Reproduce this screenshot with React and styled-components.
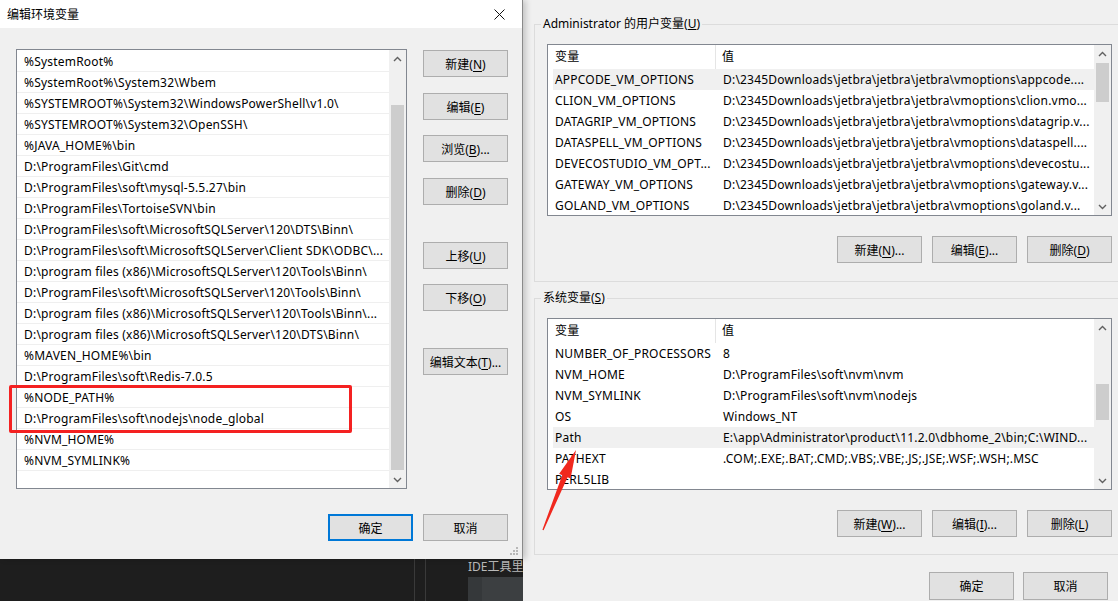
import styled, { createGlobalStyle } from "styled-components";

const GlobalStyle = createGlobalStyle`
  html, body {
    margin: 0;
    padding: 0;
  }
  body {
    width: 1118px;
    height: 601px;
    overflow: hidden;
    font-family: "Noto Sans", "Noto Sans CJK SC", sans-serif;
    font-size: 12px;
    letter-spacing: 0.2px;
    color: #000;
  }
`;

const Screen = styled.div`
  display: flex;
  width: 1118px;
  height: 601px;
  overflow: hidden;
  background: #f0f0f0;
`;

/* ---------- left: 编辑环境变量 dialog ---------- */

const LeftColumn = styled.div`
  width: 523px;
  flex-shrink: 0;
  display: flex;
  flex-direction: column;
  position: relative;
  z-index: 2;
`;

const Dialog = styled.div`
  height: 559px;
  box-sizing: border-box;
  background: #f0f0f0;
  border-right: 1px solid #8a8a8a;
  box-shadow: 3px 0 6px rgba(0, 0, 0, 0.18);
  position: relative;
  display: flex;
  flex-direction: column;
`;

const TitleBar = styled.div`
  height: 28px;
  background: #fff;
  display: flex;
  align-items: center;
  justify-content: space-between;
  padding: 0 17px 0 7px;
  font-size: 12px;
  letter-spacing: 0;
`;

const DialogBody = styled.div`
  display: flex;
  padding: 21px 14px 0 16px;
`;

const PathList = styled.div`
  position: relative;
  width: 391px;
  height: 440px;
  box-sizing: border-box;
  border: 1px solid #828790;
  background: #fff;
  display: flex;
`;

const PathRows = styled.div`
  flex: 1;
  padding-top: 1px;
  overflow: hidden;
`;

const PathRow = styled.div`
  height: 20px;
  border-bottom: 1px solid #efefef;
  padding-left: 7px;
  line-height: 22px;
  white-space: nowrap;
  overflow: hidden;
`;

const Highlight = styled.div`
  position: absolute;
  left: -8px;
  top: 335px;
  width: 343px;
  height: 48px;
  box-sizing: border-box;
  border: 3px solid #f42121;
  border-radius: 2px;
  pointer-events: none;
`;

const ScrollBar = styled.div`
  width: 17px;
  flex-shrink: 0;
  background: #f0f0f0;
  display: flex;
  flex-direction: column;
`;

const ScrollArrow = styled.div`
  height: 17px;
  display: flex;
  align-items: center;
  justify-content: center;
`;

const ScrollTrack = styled.div`
  flex: 1;
  display: flex;
  flex-direction: column;
`;

const Thumb = styled.div`
  margin: ${(p) => p.$offset}px 2px 0 2px;
  height: ${(p) => p.$size}px;
  background: #cdcdcd;
`;

const ButtonColumn = styled.div`
  margin-left: 16px;
  display: flex;
  flex-direction: column;
`;

const Button = styled.button`
  width: 85px;
  height: ${(p) => (p.$tall ? 28 : 27)}px;
  margin: 0;
  margin-top: ${(p) => p.$gap || 0}px;
  padding: 0;
  box-sizing: border-box;
  background: #e1e1e1;
  border: ${(p) => (p.$default ? "2px solid #0078d7" : "1px solid #adadad")};
  font-family: inherit;
  font-size: 12px;
  letter-spacing: 0;
  color: #000;
  u {
    text-underline-offset: 2px;
  }
`;

const DialogFooter = styled.div`
  display: flex;
  justify-content: flex-end;
  gap: 10px;
  padding: 25px 14px 0 0;
`;

const Grip = styled.svg`
  position: absolute;
  right: 3px;
  bottom: 3px;
`;

/* ---------- dark IDE strip under the dialog ---------- */

const IdeStrip = styled.div`
  flex: 1;
  background: #1e1e1e;
  display: flex;
  padding-left: 414px;
`;

const IdeLine = styled.div`
  width: 1px;
  background: #3a3a3a;
  margin-right: ${(p) => p.$after}px;
`;

const IdeTab = styled.div`
  flex: 1;
  display: flex;
  flex-direction: column;
  overflow: hidden;
`;

const IdeText = styled.div`
  color: #b9b9b9;
  height: 18px;
  line-height: 16px;
  letter-spacing: 0;
  white-space: nowrap;
`;

const IdeBlock = styled.div`
  flex: 1;
  background: #3c3f41;
  border-left: 14px solid #35383a;
`;

/* ---------- right: 环境变量 dialog ---------- */

const RightPanel = styled.div`
  flex: 1;
  position: relative;
  padding: 16px 0 0 11px;
  overflow: hidden;
`;

const Group = styled.fieldset`
  border: 1px solid #dcdcdc;
  margin: ${(p) => p.$top || 0}px -7px 0 0;
  padding: 12px 12px ${(p) => p.$bottom}px 12px;
  min-width: 0;
`;

const Legend = styled.legend`
  margin-left: -6px;
  padding: 0 2px;
  line-height: 16px;
  font-size: 12px;
  letter-spacing: 0;
`;

const VarList = styled.div`
  height: 172px;
  box-sizing: border-box;
  border: 1px solid #828790;
  background: #fff;
  display: flex;
`;

const VarTable = styled.div`
  flex: 1;
  overflow: hidden;
`;

const HeaderRow = styled.div`
  display: flex;
  height: 24px;
  line-height: 23px;
`;

const HeaderCell = styled.div`
  width: ${(p) => (p.$first ? "168px" : "auto")};
  flex: ${(p) => (p.$first ? "none" : 1)};
  box-sizing: border-box;
  padding-left: ${(p) => (p.$first ? 7 : 6)}px;
  border-right: ${(p) => (p.$first ? "1px solid #e5e5e5" : "none")};
`;

const VarRow = styled.div`
  display: flex;
  height: 21px;
  line-height: 21px;
  margin-left: 5px;
  background: ${(p) => (p.$selected ? "#f0f0f0" : "transparent")};
  white-space: nowrap;
`;

const NameCell = styled.div`
  width: 163px;
  flex: none;
  padding-left: 2px;
  box-sizing: border-box;
  overflow: hidden;
`;

const ValueCell = styled.div`
  flex: 1;
  padding-left: 7px;
  overflow: hidden;
`;

const ButtonRow = styled.div`
  display: flex;
  justify-content: flex-end;
  gap: 10px;
  margin-top: 20px;
`;

const Footer = styled.div`
  display: flex;
  justify-content: flex-end;
  gap: 9px;
  padding: 17px 10px 0 0;
`;

const Arrow = styled.svg`
  position: absolute;
  left: 7px;
  top: 440px;
`;

const pathEntries = [
  "%SystemRoot%",
  "%SystemRoot%\\System32\\Wbem",
  "%SYSTEMROOT%\\System32\\WindowsPowerShell\\v1.0\\",
  "%SYSTEMROOT%\\System32\\OpenSSH\\",
  "%JAVA_HOME%\\bin",
  "D:\\ProgramFiles\\Git\\cmd",
  "D:\\ProgramFiles\\soft\\mysql-5.5.27\\bin",
  "D:\\ProgramFiles\\TortoiseSVN\\bin",
  "D:\\ProgramFiles\\soft\\MicrosoftSQLServer\\120\\DTS\\Binn\\",
  "D:\\ProgramFiles\\soft\\MicrosoftSQLServer\\Client SDK\\ODBC\\...",
  "D:\\program files (x86)\\MicrosoftSQLServer\\120\\Tools\\Binn\\",
  "D:\\ProgramFiles\\soft\\MicrosoftSQLServer\\120\\Tools\\Binn\\",
  "D:\\program files (x86)\\MicrosoftSQLServer\\120\\Tools\\Binn\\...",
  "D:\\program files (x86)\\MicrosoftSQLServer\\120\\DTS\\Binn\\",
  "%MAVEN_HOME%\\bin",
  "D:\\ProgramFiles\\soft\\Redis-7.0.5",
  "%NODE_PATH%",
  "D:\\ProgramFiles\\soft\\nodejs\\node_global",
  "%NVM_HOME%",
  "%NVM_SYMLINK%",
];

const jb = "D:\\2345Downloads\\jetbra\\jetbra\\jetbra\\vmoptions\\";

const userVars = [
  ["APPCODE_VM_OPTIONS", jb + "appcode....", true],
  ["CLION_VM_OPTIONS", jb + "clion.vmo..."],
  ["DATAGRIP_VM_OPTIONS", jb + "datagrip.v..."],
  ["DATASPELL_VM_OPTIONS", jb + "dataspell...."],
  ["DEVECOSTUDIO_VM_OPT...", jb + "devecostu..."],
  ["GATEWAY_VM_OPTIONS", jb + "gateway.v..."],
  ["GOLAND_VM_OPTIONS", jb + "goland.v..."],
];

const systemVars = [
  ["NUMBER_OF_PROCESSORS", "8"],
  ["NVM_HOME", "D:\\ProgramFiles\\soft\\nvm\\nvm"],
  ["NVM_SYMLINK", "D:\\ProgramFiles\\soft\\nvm\\nodejs"],
  ["OS", "Windows_NT"],
  ["Path", "E:\\app\\Administrator\\product\\11.2.0\\dbhome_2\\bin;C:\\WIND...", true],
  ["PATHEXT", ".COM;.EXE;.BAT;.CMD;.VBS;.VBE;.JS;.JSE;.WSF;.WSH;.MSC"],
  ["PERL5LIB", ""],
];

const Chevron = ({ up }) => (
  <svg width="9" height="6" viewBox="0 0 9 6">
    <polyline
      points={up ? "1,5 4.5,1.5 8,5" : "1,1 4.5,4.5 8,1"}
      fill="none"
      stroke="#606060"
      strokeWidth="1.4"
    />
  </svg>
);

const Scroll = ({ offset, size }) => (
  <ScrollBar>
    <ScrollArrow>
      <Chevron up />
    </ScrollArrow>
    <ScrollTrack>
      <Thumb $offset={offset} $size={size} />
    </ScrollTrack>
    <ScrollArrow>
      <Chevron />
    </ScrollArrow>
  </ScrollBar>
);

const Label = ({ text, mnemonic, tail = "" }) => (
  <>
    {text}(<u>{mnemonic}</u>){tail}
  </>
);

const VariableList = ({ rows, thumbOffset, thumbSize }) => (
  <VarList>
    <VarTable>
      <HeaderRow>
        <HeaderCell $first>变量</HeaderCell>
        <HeaderCell>值</HeaderCell>
      </HeaderRow>
      {rows.map(([name, value, selected]) => (
        <VarRow key={name} $selected={selected}>
          <NameCell>{name}</NameCell>
          <ValueCell>{value}</ValueCell>
        </VarRow>
      ))}
    </VarTable>
    <Scroll offset={thumbOffset} size={thumbSize} />
  </VarList>
);

const App = () => {
  return (
    <Screen>
      <GlobalStyle />
      <LeftColumn>
        <Dialog>
          <TitleBar>
            <span>编辑环境变量</span>
            <svg width="11" height="11" viewBox="0 0 11 11">
              <path d="M0.5 0.5 L10.5 10.5 M10.5 0.5 L0.5 10.5" stroke="#111" strokeWidth="1" />
            </svg>
          </TitleBar>
          <DialogBody>
            <PathList>
              <PathRows>
                {pathEntries.map((p) => (
                  <PathRow key={p}>{p}</PathRow>
                ))}
              </PathRows>
              <Scroll offset={38} size={365} />
              <Highlight />
            </PathList>
            <ButtonColumn>
              <Button $gap={1}><Label text="新建" mnemonic="N" /></Button>
              <Button $gap={16}><Label text="编辑" mnemonic="E" /></Button>
              <Button $gap={15}><Label text="浏览" mnemonic="B" tail="..." /></Button>
              <Button $gap={16}><Label text="删除" mnemonic="D" /></Button>
              <Button $gap={37}><Label text="上移" mnemonic="U" /></Button>
              <Button $gap={15}><Label text="下移" mnemonic="O" /></Button>
              <Button $gap={37}><Label text="编辑文本" mnemonic="T" tail="..." /></Button>
            </ButtonColumn>
          </DialogBody>
          <DialogFooter>
            <Button $default>确定</Button>
            <Button>取消</Button>
          </DialogFooter>
          <Grip width="9" height="9" viewBox="0 0 9 9">
            {[
              [6, 0], [3, 3], [6, 3], [0, 6], [3, 6], [6, 6],
            ].map(([x, y]) => (
              <rect key={`${x}-${y}`} x={x} y={y} width="2" height="2" fill="#b8b8b8" />
            ))}
          </Grip>
        </Dialog>
        <IdeStrip>
          <IdeLine $after={10} />
          <IdeLine $after={42} />
          <IdeTab>
            <IdeText>IDE工具里</IdeText>
            <IdeBlock />
          </IdeTab>
        </IdeStrip>
      </LeftColumn>

      <RightPanel>
        <Group $bottom={18}>
          <Legend>
            Administrator 的用户变量(<u>U</u>)
          </Legend>
          <VariableList rows={userVars} thumbOffset={1} thumbSize={39} />
          <ButtonRow>
            <Button><Label text="新建" mnemonic="N" tail="..." /></Button>
            <Button><Label text="编辑" mnemonic="E" tail="..." /></Button>
            <Button><Label text="删除" mnemonic="D" /></Button>
          </ButtonRow>
        </Group>
        <Group $top={8} $bottom={17}>
          <Legend>
            系统变量(<u>S</u>)
          </Legend>
          <VariableList rows={systemVars} thumbOffset={48} thumbSize={36} />
          <ButtonRow>
            <Button><Label text="新建" mnemonic="W" tail="..." /></Button>
            <Button><Label text="编辑" mnemonic="I" tail="..." /></Button>
            <Button><Label text="删除" mnemonic="L" /></Button>
          </ButtonRow>
        </Group>
        <Footer>
          <Button $tall>确定</Button>
          <Button $tall>取消</Button>
        </Footer>
        <Arrow width="60" height="100" viewBox="0 0 60 100">
          <polygon
            points="46,10 40.6,38.5 37.6,37.2 13.6,90.2 12.4,89.8 32.2,35.2 29.2,33.8"
            fill="#f0281e"
          />
        </Arrow>
      </RightPanel>
    </Screen>
  );
};

export default App;
